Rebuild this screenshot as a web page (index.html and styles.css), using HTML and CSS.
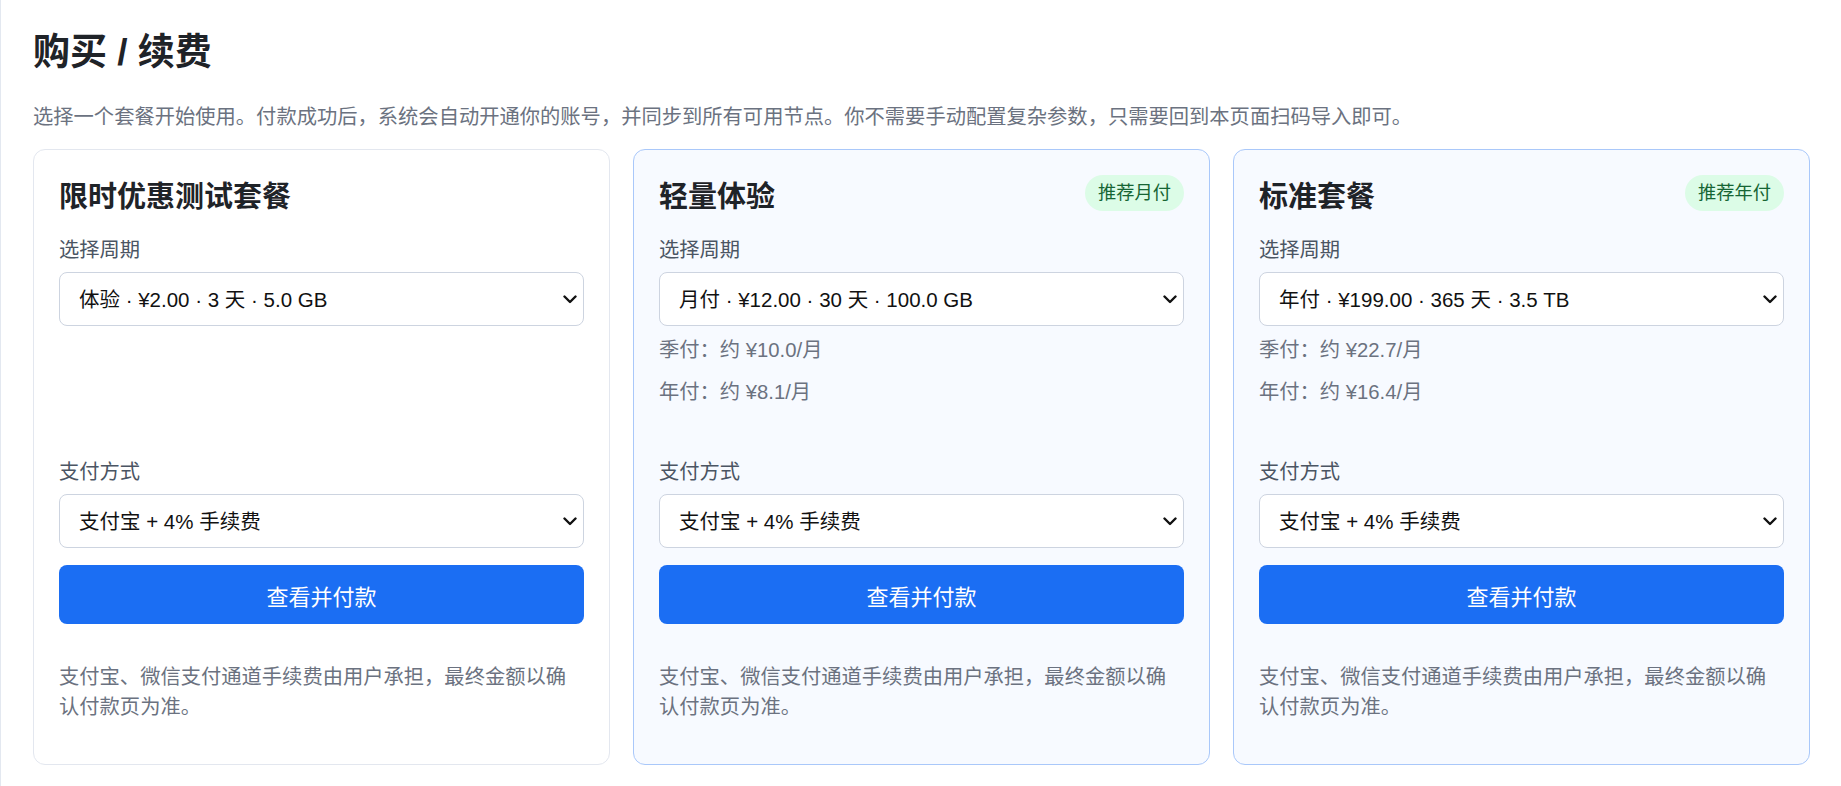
FILE: index.html
```html
<!DOCTYPE html>
<html lang="zh-CN">
<head>
<meta charset="utf-8">
<title>购买 / 续费</title>
<link rel="stylesheet" href="styles.css">
</head>
<body>
<main class="page">
  <h1 class="page-title">购买 / 续费</h1>
  <p class="page-desc">选择一个套餐开始使用。付款成功后，系统会自动开通你的账号，并同步到所有可用节点。你不需要手动配置复杂参数，只需要回到本页面扫码导入即可。</p>
  <div class="plans">
    <section class="plan">
      <div class="plan-head">
        <h2 class="plan-name">限时优惠测试套餐</h2>
      </div>
      <label class="field-label">选择周期</label>
      <select class="field-select"><option>体验 · ¥2.00 · 3 天 · 5.0 GB</option></select>
      <div class="hints"></div>
      <label class="field-label">支付方式</label>
      <select class="field-select"><option>支付宝 + 4% 手续费</option></select>
      <button class="pay-btn" type="button">查看并付款</button>
      <p class="note">支付宝、微信支付通道手续费由用户承担，最终金额以确认付款页为准。</p>
    </section>
    <section class="plan plan-featured">
      <div class="plan-head">
        <h2 class="plan-name">轻量体验</h2>
        <span class="badge">推荐月付</span>
      </div>
      <label class="field-label">选择周期</label>
      <select class="field-select"><option>月付 · ¥12.00 · 30 天 · 100.0 GB</option></select>
      <div class="hints">
        <p class="hint">季付：约 ¥10.0/月</p>
        <p class="hint">年付：约 ¥8.1/月</p>
      </div>
      <label class="field-label">支付方式</label>
      <select class="field-select"><option>支付宝 + 4% 手续费</option></select>
      <button class="pay-btn" type="button">查看并付款</button>
      <p class="note">支付宝、微信支付通道手续费由用户承担，最终金额以确认付款页为准。</p>
    </section>
    <section class="plan plan-featured">
      <div class="plan-head">
        <h2 class="plan-name">标准套餐</h2>
        <span class="badge">推荐年付</span>
      </div>
      <label class="field-label">选择周期</label>
      <select class="field-select"><option>年付 · ¥199.00 · 365 天 · 3.5 TB</option></select>
      <div class="hints">
        <p class="hint">季付：约 ¥22.7/月</p>
        <p class="hint">年付：约 ¥16.4/月</p>
      </div>
      <label class="field-label">支付方式</label>
      <select class="field-select"><option>支付宝 + 4% 手续费</option></select>
      <button class="pay-btn" type="button">查看并付款</button>
      <p class="note">支付宝、微信支付通道手续费由用户承担，最终金额以确认付款页为准。</p>
    </section>
  </div>
</main>
</body>
</html>
```

FILE: styles.css
```css
html, body {
  margin: 0;
  padding: 0;
  background: #ffffff;
}

body {
  font-family: "Liberation Sans", "Noto Sans CJK SC", sans-serif;
  color: #1f2328;
}

.page {
  box-sizing: border-box;
  min-height: 786px;
  border-left: 1px solid #e3e8f0;
  padding: 31px 31px 0 32px;
}

.page-title {
  margin: 0;
  font-size: 37px;
  line-height: 43px;
  font-weight: 700;
  color: #1f2328;
}

.page-desc {
  margin: 28px 0 0;
  font-size: 20.3px;
  line-height: 30px;
  color: #6b7280;
}

.plans {
  margin-top: 17px;
  display: grid;
  grid-template-columns: repeat(3, 1fr);
  gap: 23px;
}

.plan {
  display: flex;
  flex-direction: column;
  border: 1px solid #e3e7ef;
  border-radius: 12px;
  background: #ffffff;
  padding: 25px;
}

.plan-featured {
  background: #f7faff;
  border-color: #a9c8fa;
}

.plan-head {
  display: flex;
  justify-content: space-between;
  align-items: flex-start;
}

.plan-name {
  margin: 0;
  font-size: 29px;
  line-height: 44px;
  font-weight: 700;
  color: #1f2328;
}

.badge {
  font-size: 18.3px;
  line-height: 36px;
  padding: 0 13px;
  border-radius: 18px;
  background: #dcfce7;
  color: #166534;
}

.field-label {
  display: block;
  margin-top: 16px;
  font-size: 20.3px;
  line-height: 30px;
  color: #4b5563;
}

.field-select {
  display: block;
  width: 100%;
  height: 54px;
  margin-top: 7px;
  box-sizing: border-box;
  padding: 0 36px 0 19px;
  font-family: inherit;
  font-size: 20.5px;
  color: #111111;
  -webkit-appearance: none;
  appearance: none;
  background-color: #ffffff;
  background-image: url("data:image/svg+xml;utf8,<svg xmlns='http://www.w3.org/2000/svg' width='14' height='9' viewBox='0 0 14 9'><path d='M1.5 1.5 L7 7 L12.5 1.5' fill='none' stroke='%23111' stroke-width='2.4' stroke-linecap='round' stroke-linejoin='round'/></svg>");
  background-repeat: no-repeat;
  background-position: right 6px center;
  background-size: 14px 9px;
  border: 1px solid #cdd4e0;
  border-radius: 8px;
}

.hints {
  height: 115px;
}

.hint {
  margin: 10px 0 0;
  font-size: 20.3px;
  line-height: 32px;
  color: #6b7280;
}

.hint:first-child {
  margin-top: 8px;
}

.pay-btn {
  display: block;
  width: 100%;
  height: 59px;
  margin-top: 17px;
  border: none;
  border-radius: 8px;
  background: #1b6ef3;
  color: #ffffff;
  font-family: inherit;
  font-size: 22px;
  cursor: pointer;
}

.note {
  margin: 38px 0 17px;
  font-size: 20.3px;
  line-height: 30px;
  color: #6b7280;
}
```
